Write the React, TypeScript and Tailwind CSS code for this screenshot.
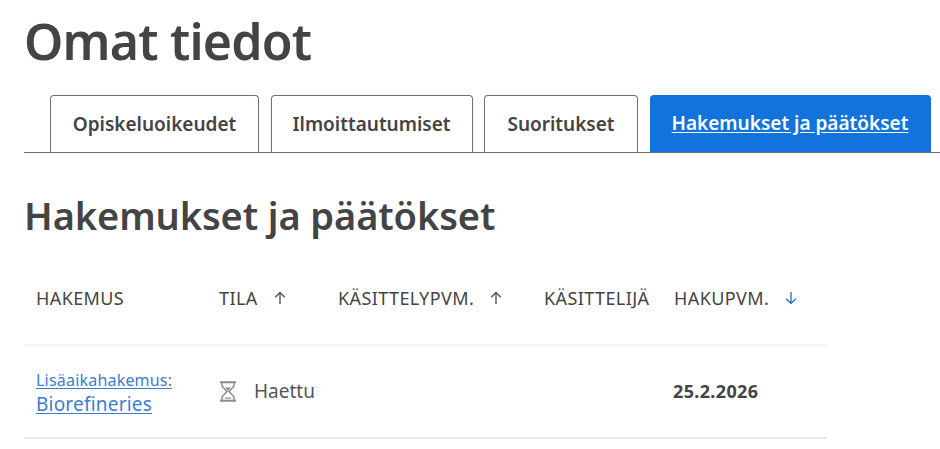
import React from 'react';

const Tab = ({ label, width, active }: { label: string; width: string; active?: boolean }) => (
  <a
    className={
      active
        ? `${width} h-[57px] flex items-center justify-center rounded-t-[4px] bg-[#1273dc] text-white underline underline-offset-2 text-[19px] font-semibold`
        : `${width} h-[57px] flex items-center justify-center rounded-t-[4px] border border-b-0 border-[#6f6f6f] bg-white text-[#444444] text-[19px] font-semibold`
    }
  >
    {label}
  </a>
);

const ArrowUp = ({ className }: { className: string }) => (
  <svg viewBox="0 0 14 14" className={className} fill="none" stroke="currentColor" strokeWidth="1.4">
    <path d="M7 13V1.5M2.2 6.2 7 1.5l4.8 4.7" />
  </svg>
);

const ArrowDown = ({ className }: { className: string }) => (
  <svg viewBox="0 0 14 14" className={className} fill="none" stroke="currentColor" strokeWidth="1.4">
    <path d="M7 1v11.5M2.2 7.8 7 12.5l4.8-4.7" />
  </svg>
);

const Hourglass = () => (
  <svg viewBox="0 0 18 21" className="w-[18px] h-[21px] text-[#8c8c8c]" fill="none" stroke="currentColor" strokeWidth="1.5">
    <path d="M1 1.2h16M1 19.8h16" strokeWidth="2" />
    <path d="M3 2v3.2l5 5.3-5 5.3V19M15 2v3.2l-5 5.3 5 5.3V19" />
    <path d="M6 6.5h6L9 9.7zM6 16.4h6v1.4H6z" fill="currentColor" stroke="none" />
  </svg>
);

export default function App() {
  return (
    <div className="w-[940px] h-[449px] overflow-hidden bg-white pl-6 font-['Noto_Sans',sans-serif] text-[#444444]">
      <h1 className="pt-[11px] h-[95px] text-[50px] leading-[60px] font-semibold tracking-[-0.8px]">Omat tiedot</h1>

      <div className="flex gap-[11.5px] pl-[26px] border-b border-[#6f6f6f] h-[58px]">
        <Tab label="Opiskeluoikeudet" width="w-[209px]" />
        <Tab label="Ilmoittautumiset" width="w-[202px]" />
        <Tab label="Suoritukset" width="w-[154px]" />
        <Tab label="Hakemukset ja päätökset" width="w-[281px]" active />
      </div>

      <h2 className="mt-[37px] h-[72px] text-[38px] leading-[50px] font-semibold tracking-[-0.1px]">Hakemukset ja päätökset</h2>

      <div className="w-[803px]">
        <div className="grid grid-cols-[183px_119px_206px_130px_1fr] h-[84px] pl-3 pb-[10px] items-center border-b-2 border-[#f4f4f5] text-[18px] tracking-[0.4px]">
          <div>HAKEMUS</div>
          <div className="flex items-center gap-[15px]">
            TILA
            <ArrowUp className="w-[14px] h-[14px] text-[#55555a]" />
          </div>
          <div className="flex items-center gap-[15px]">
            KÄSITTELYPVM.
            <ArrowUp className="w-[14px] h-[14px] text-[#55555a]" />
          </div>
          <div>KÄSITTELIJÄ</div>
          <div className="flex items-center gap-[15px]">
            HAKUPVM.
            <ArrowDown className="w-[14px] h-[14px] text-[#2f74c8]" />
          </div>
        </div>

        <div className="grid grid-cols-[183px_119px_206px_130px_1fr] h-[93px] pl-3 items-center border-b-2 border-[#e6e7ec]">
          <a className="flex flex-col items-start text-[#3b7dd0] underline underline-offset-2">
            <span className="text-[16px] leading-[24px] tracking-[0.2px]">Lisäaikahakemus:</span>
            <span className="text-[19px] leading-[24px] tracking-[0.2px]">Biorefineries</span>
          </a>
          <div className="flex items-center gap-[17px] col-span-3 text-[19px] text-[#55555a]">
            <Hourglass />
            Haettu
          </div>
          <div className="text-[18px] font-bold tracking-[0.35px] -ml-px">25.2.2026</div>
        </div>
      </div>
    </div>
  );
}
